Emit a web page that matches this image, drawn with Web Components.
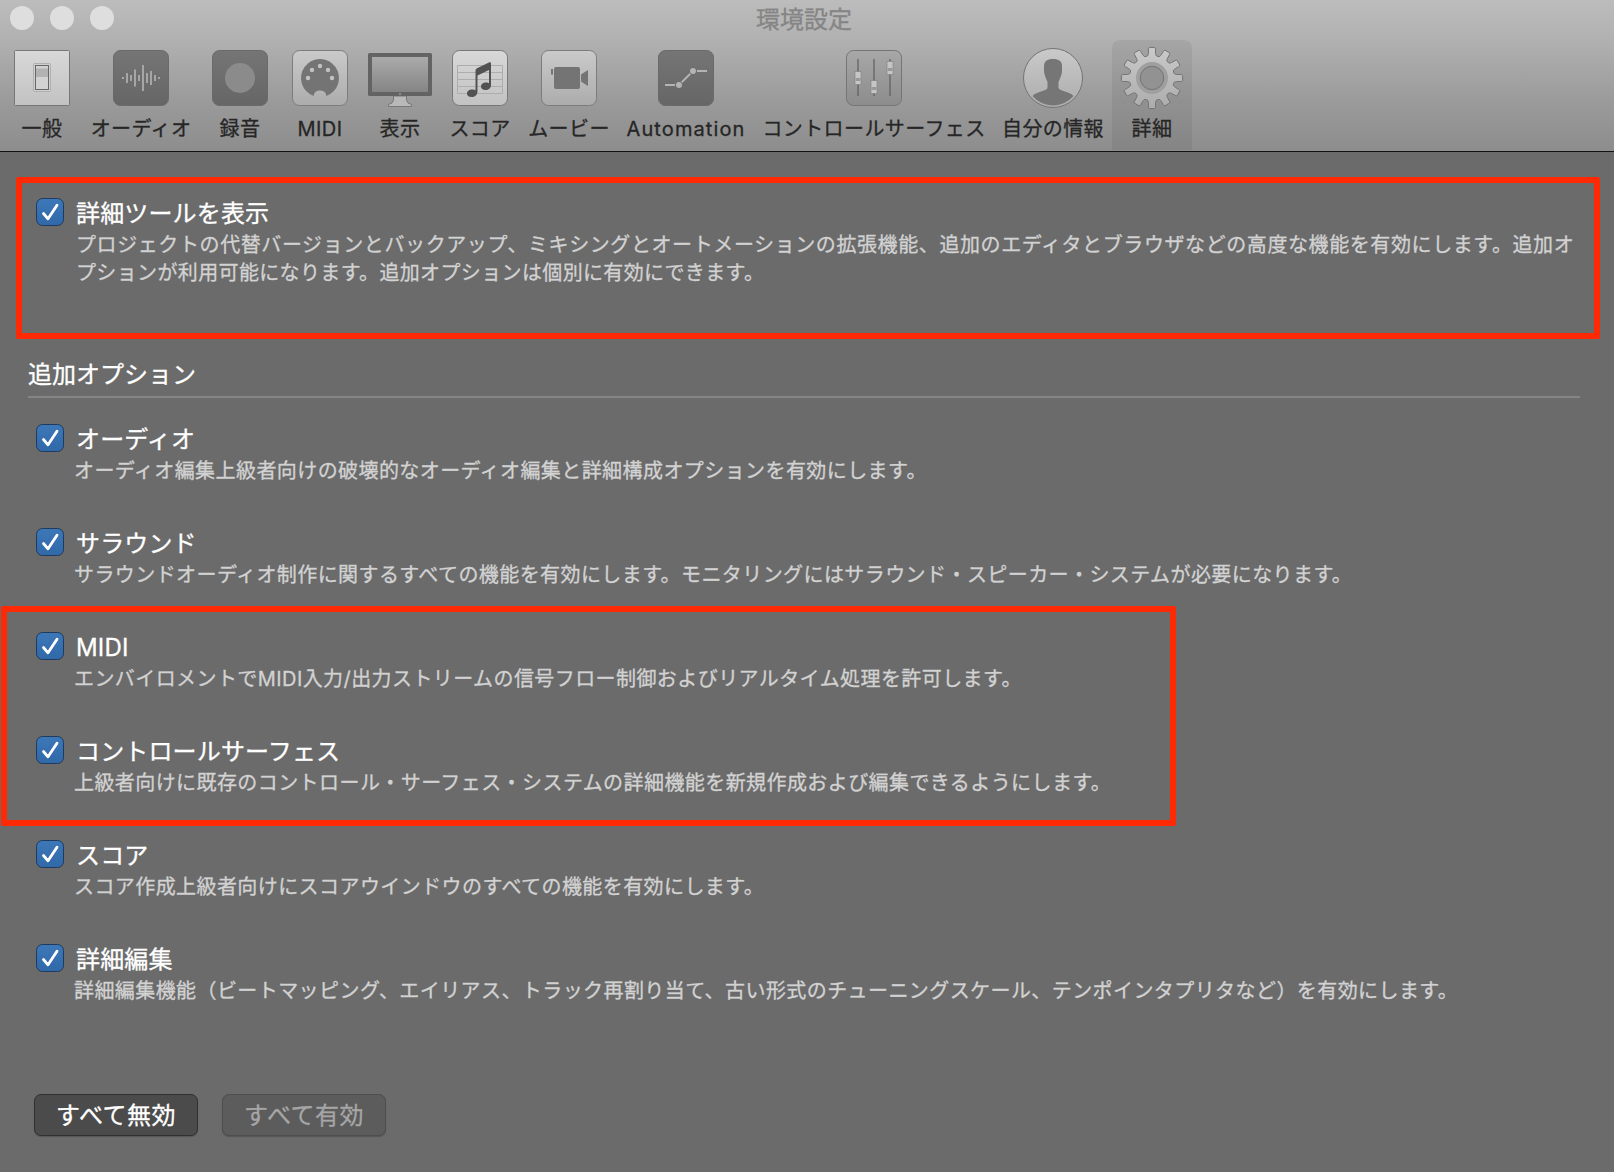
<!DOCTYPE html>
<html lang="ja">
<head>
<meta charset="utf-8">
<title>環境設定</title>
<style>
    html, body {
        margin: 0;
        height: 100%;
        overflow: hidden;
    }

    body {
        background: #6b6b6b;
        font-family: Inter, "Noto Sans CJK JP", sans-serif;
        font-size: 20px;
        -webkit-text-stroke: .3px;
    }
</style>
</head>
<body>
<pref-window heading="環境設定">
    <pref-tab slot="tabs" icon="general" style="width: 80px">一般</pref-tab>
    <pref-tab slot="tabs" icon="audio" style="width: 118px">オーディオ</pref-tab>
    <pref-tab slot="tabs" icon="record" style="width: 80px">録音</pref-tab>
    <pref-tab slot="tabs" icon="midi" style="width: 80px">MIDI</pref-tab>
    <pref-tab slot="tabs" icon="display" style="width: 80px">表示</pref-tab>
    <pref-tab slot="tabs" icon="score" style="width: 80px">スコア</pref-tab>
    <pref-tab slot="tabs" icon="movie" style="width: 98px">ムービー</pref-tab>
    <pref-tab slot="tabs" icon="automation" style="width: 136px; letter-spacing: 1.1px">Automation</pref-tab>
    <pref-tab slot="tabs" icon="surface" style="width: 240px">コントロールサーフェス</pref-tab>
    <pref-tab slot="tabs" icon="profile" style="width: 118px">自分の情報</pref-tab>
    <pref-tab slot="tabs" icon="advanced" style="width: 80px" active>詳細</pref-tab>

    <mark-box style="margin: 25px 14px 0 16px; height: 162px; padding: 15px 0 0 14px">
        <pref-option label="詳細ツールを表示" main><span style="letter-spacing: .59px">プロジェクトの代替バージョンとバックアップ、ミキシングとオートメーションの拡張機能、追加のエディタとブラウザなどの高度な機能を有効にします。追加オ</span><br>プションが利用可能になります。追加オプションは個別に有効にできます。</pref-option>
    </mark-box>
    <pref-heading>追加オプション</pref-heading>
    <pref-option label="オーディオ">オーディオ編集上級者向けの破壊的なオーディオ編集と詳細構成オプションを有効にします。</pref-option>
    <pref-option label="サラウンド">サラウンドオーディオ制作に関するすべての機能を有効にします。モニタリングにはサラウンド・スピーカー・システムが必要になります。</pref-option>
    <mark-box style="margin: -26px 0 14px 1px; width: 1175px; height: 220px; padding: 20px 0 0 29px">
        <pref-option label="MIDI">エンバイロメントでMIDI入力/出力ストリームの信号フロー制御およびリアルタイム処理を許可します。</pref-option>
        <pref-option label="コントロールサーフェス">上級者向けに既存のコントロール・サーフェス・システムの詳細機能を新規作成および編集できるようにします。</pref-option>
    </mark-box>
    <pref-option label="スコア">スコア作成上級者向けにスコアウインドウのすべての機能を有効にします。</pref-option>
    <pref-option label="詳細編集">詳細編集機能（ビートマッピング、エイリアス、トラック再割り当て、古い形式のチューニングスケール、テンポインタプリタなど）を有効にします。</pref-option>

    <pref-button slot="actions">すべて無効</pref-button>
    <pref-button slot="actions" disabled>すべて有効</pref-button>
</pref-window>

<script>
// toolbar icons, centred on 0,0
const gear = () => {
    let d = "";
    const p = (r, a) => {
        a = a * Math.PI / 180;
        return (r * Math.sin(a)).toFixed(2) + " " + (-r * Math.cos(a)).toFixed(2);
    };
    for (let i = 0; i < 12; i++) {
        const a = i * 30;
        d += (i ? "L" : "M") + p(22.5, a - 11.5);
        d += "Q" + p(23.5, a - 9) + " " + p(25, a - 8.2);
        d += "L" + p(29, a - 7) + "Q" + p(30.6, a - 6.6) + " " + p(30.7, a - 5);
        d += "L" + p(30.7, a + 5) + "Q" + p(30.6, a + 6.6) + " " + p(29, a + 7);
        d += "L" + p(25, a + 8.2) + "Q" + p(23.5, a + 9) + " " + p(22.5, a + 11.5);
    }
    return d + "Z";
};

const bars = [[-18.5, 1], [-14.5, 5], [-10.5, 3], [-6.5, 8.5], [-2.5, 3], [1.5, 13], [5.5, 5], [9.5, 7], [13.5, 3], [17.5, 1]];

const tile = (fill, stroke, r = 7) =>
    `<rect x="-27.5" y="-27.5" width="55" height="55" rx="${r}" fill="${fill}" stroke="${stroke}"/>`;

const icons = {
    general: `${tile("url(#light)", "#777", 1)}
        <rect x="-9" y="-15" width="18" height="29" rx="2" fill="#b0b0b0"/>
        <rect x="-8" y="-14" width="16" height="27" rx="1" fill="#d0d0d0"/>
        <rect x="-6.5" y="-12.5" width="13" height="24" fill="#d2d2d2" stroke="#666"/>
        <rect x="-6" y="-9.5" width="12" height="8.5" fill="#b2b2b2"/>`,
    audio: `${tile("url(#dark)", "#6a6a6a")}
        ${bars.map(([x, h]) => `<rect x="${x - .5}" y="${-h}" width="2" height="${h * 2}" fill="#a6a6a6"/>`).join("")}`,
    record: `${tile("url(#dark)", "#6a6a6a")}<circle r="15" fill="#8b8b8b"/>`,
    midi: `${tile("url(#mid)", "#7c7c7c")}
        <path d="M-6.5 17.9A19 19 0 1 1 6.5 17.9A6.6 6.6 0 0 0 -6.5 17.9Z" fill="#747474"/>
        <g fill="#c2c2c2"><circle cy="-12" r="2.2"/><circle cx="-8" cy="-8" r="2.2"/><circle cx="8" cy="-8" r="2.2"/><circle cx="-12" r="2.2"/><circle cx="12" r="2.2"/></g>`,
    display: `<path d="M-6.5 18H6.5V22Q7 25.5 11.5 26.5V28.5H-11.5V26.5Q-7 25.5 -6.5 22Z" fill="#b9b9b9" stroke="#777"/>
        <rect x="-32" y="-25" width="64" height="43" rx="1.5" fill="#636363"/>
        <rect x="-28" y="-21" width="56" height="35" fill="url(#screen)"/>
        <circle cy="16" r="1.2" fill="#8a8a8a"/>`,
    score: `${tile("url(#light)", "#777")}
        <path d="M-22.5 -12.5H22.5V15.5H-22.5ZM-22.5 -5.5H22.5M-22.5 1.5H22.5M-22.5 8.5H22.5" fill="none" stroke="#adadad"/>
        <path d="M-4.500 -7.500Q-4.500 -9 -3 -9.700L9.500 -15.700Q11 -16.300 11 -14.500V7C11 10.500 8.500 12 5.500 12C2.500 12 1 10.500 1 8.500C1 6 3.500 4.500 6 4.500C7.500 4.500 8.500 5 9 5.300V-8L-2.500 -2.500V13C-2.500 17 -5 19 -8.500 19C-11.500 19 -13 17.500 -13 15.500C-13 13 -10.500 11.500 -8 11.500C-6.500 11.500 -5 12 -4.500 12.300Z" fill="#525252"/>`,
    movie: `${tile("url(#mid)", "#7c7c7c")}
        <rect x="-15" y="-11" width="26" height="22" rx="2" fill="#747474"/>
        <path d="M12 -3.5L19 -8V8L12 3.5ZM-18 -9H-16V-3.5H-18Z" fill="#747474"/>`,
    automation: `${tile("url(#dark)", "#6a6a6a")}
        <path d="M-21 7H-7L7 -7H21" fill="none" stroke="#b4b4b4" stroke-width="1.800"/>
        <g fill="#b4b4b4" stroke="#6a6a6a"><circle cx="-7" cy="7" r="3.6"/><circle cx="7" cy="-7" r="3.6"/></g>`,
    surface: `${tile("url(#panel)", "#757575")}
        <path d="M-16 -19V18M0 -19V18M16 -19V18" stroke="#505050"/>
        ${[[-16, 0], [0, 9], [16, -10]].map(([x, y]) => `<rect x="${x - 3}" y="${y - 6.5}" width="6" height="13" fill="#c6c6c6" stroke="#858585" stroke-width=".7"/><path d="M${x - 2.5} ${y}h5v3h-5z" fill="#999"/>`).join("")}`,
    profile: `<circle r="29.5" fill="url(#mid)" stroke="#747474"/>
        <path d="M0 -19C6 -19 9 -16.500 9 -12V-7C9 -5 8.500 -3 7.500 -1C7 1 6 2.500 5.500 4V10C7 13.500 16 13 20.500 18A27 27 0 0 1 -20.500 18C-16 13 -7 13.500 -5.500 10V4C-6 2.500 -7 1 -7.500 -1C-8.500 -3 -9 -5 -9 -7V-12C-9 -16.500 -6 -19 0 -19Z" fill="#767676"/>`,
    advanced: `<path d="${gear()}" fill="url(#mid)" stroke="#747474"/>
        <circle r="14" fill="#929292" stroke="#9f9f9f" stroke-width="4"/>
        <circle r="11.7" fill="#929292" stroke="#747474"/>`
};

const defs = `<defs>
    <linearGradient id="light" x2="0" y2="1"><stop stop-color="#d8d8d8"/><stop offset="1" stop-color="#c2c2c2"/></linearGradient>
    <linearGradient id="mid" x2="0" y2="1"><stop stop-color="#cacaca"/><stop offset="1" stop-color="#acacac"/></linearGradient>
    <linearGradient id="dark" x2="0" y2="1"><stop stop-color="#757575"/><stop offset="1" stop-color="#666"/></linearGradient>
    <linearGradient id="screen" x2="0" y2="1"><stop stop-color="#aaa"/><stop offset="1" stop-color="#858585"/></linearGradient>
    <linearGradient id="panel" x2="0" y2="1"><stop stop-color="#a8a8a8"/><stop offset="1" stop-color="#8c8c8c"/></linearGradient>
</defs>`;

customElements.define('pref-window', class extends HTMLElement {
    constructor() {
        super();
        this.attachShadow({ mode: 'open' });
        this.shadowRoot.innerHTML = `
        <style>
        :host {
            display: flex;
            flex-direction: column;
            height: 1172px;
            background: #6b6b6b;
        }

        header {
            display: flex;
            flex-direction: column;
            height: 151px;
            background: linear-gradient(#bcbcbc, #b2b2b2 24%, #9a9a9a 68%, #8d8d8d);
            border-bottom: 1px solid #111;
        }

        .title {
            display: grid;
            grid-template-columns: 1fr auto 1fr;
            align-items: center;
            height: 40px;
            padding-right: 6px;
            font-size: 24px;
            line-height: 36px;
            color: #858585;
        }

        .lights {
            display: flex;
            gap: 16px;
            padding: 0 0 4px 10px;
        }

        .lights i {
            width: 24px;
            height: 24px;
            border-radius: 50%;
            background: #dedede;
        }

        nav {
            display: flex;
            padding-left: 2px;
        }

        main {
            display: flex;
            flex-direction: column;
            flex: 1;
        }

        main ::slotted(pref-option) {
            margin-left: 36px;
        }

        footer {
            display: flex;
            gap: 24px;
            padding: 0 0 36px 34px;
        }
        </style>
        <header>
            <div class="title"><div class="lights"><i></i><i></i><i></i></div><span>${this.getAttribute("heading")}</span></div>
            <nav><slot name="tabs"></slot></nav>
        </header>
        <main><slot></slot></main>
        <footer><slot name="actions"></slot></footer>`;
    }
});

customElements.define('pref-tab', class extends HTMLElement {
    constructor() {
        super();
        this.attachShadow({ mode: 'open' });
        this.shadowRoot.innerHTML = `
        <style>
        :host {
            display: flex;
            flex-direction: column;
            align-items: center;
            flex: none;
            height: 110px;
            color: #262626;
            line-height: 28px;
            letter-spacing: .4px;
            white-space: nowrap;
        }

        :host([active]) {
            background: rgba(0, 0, 0, .06);
            border-radius: 8px 8px 0 0;
        }

        svg {
            display: block;
            margin-top: 4px;
        }

        span {
            margin-top: 3px;
        }
        </style>
        <svg width="68" height="68" viewBox="-34 -34 68 68">${defs}${icons[this.getAttribute("icon")]}</svg>
        <span><slot></slot></span>`;
    }
});

customElements.define('mark-box', class extends HTMLElement {
    constructor() {
        super();
        this.attachShadow({ mode: 'open' });
        this.shadowRoot.innerHTML = `
        <style>
        :host {
            display: block;
            box-sizing: border-box;
            flex: none;
            border: 6px solid #ff2a04;
            border-radius: 2px;
        }
        </style>
        <slot></slot>`;
    }
});

customElements.define('pref-heading', class extends HTMLElement {
    constructor() {
        super();
        this.attachShadow({ mode: 'open' });
        this.shadowRoot.innerHTML = `
        <style>
        :host {
            display: block;
            margin: 18px 34px 26px 28px;
            height: 39px;
            border-bottom: 2px solid #858585;
            color: #fff;
            font-size: 24px;
            line-height: 36px;
        }
        </style>
        <slot></slot>`;
    }
});

customElements.define('pref-option', class extends HTMLElement {
    constructor() {
        super();
        this.attachShadow({ mode: 'open' });
        this.shadowRoot.innerHTML = `
        <style>
        :host {
            display: flex;
            flex: none;
            gap: 12px;
            height: 104px;
            white-space: nowrap;
        }

        svg {
            flex: none;
        }

        .label {
            height: 33px;
            color: #fff;
            font-size: 24px;
            line-height: 32px;
            letter-spacing: .15px;
        }

        .text {
            margin-left: -2px;
            color: #d2d2d2;
            line-height: 28px;
            letter-spacing: .42px;
        }

        :host([main]) .text {
            margin-left: 0;
            letter-spacing: .36px;
        }
        </style>
        <svg width="28" height="28" viewBox="0 0 28 28">
            <defs><linearGradient id="blue" x2="0" y2="1"><stop stop-color="#3d78b8"/><stop offset="1" stop-color="#3068a8"/></linearGradient></defs>
            <rect x=".5" y=".5" width="27" height="27" rx="6" fill="url(#blue)" stroke="#1f3a5c"/>
            <path d="M7.5 15.5L12 20.8L21 7.2" fill="none" stroke="#fff" stroke-width="2.800" stroke-linecap="round" stroke-linejoin="round"/>
        </svg>
        <div>
            <div class="label">${this.getAttribute("label")}</div>
            <div class="text"><slot></slot></div>
        </div>`;
    }
});

customElements.define('pref-button', class extends HTMLElement {
    constructor() {
        super();
        this.attachShadow({ mode: 'open' });
        this.shadowRoot.innerHTML = `
        <style>
        :host {
            display: flex;
            align-items: center;
            justify-content: center;
            box-sizing: border-box;
            width: 164px;
            height: 42px;
            padding-top: 2px;
            border: 1px solid #303030;
            border-radius: 7px;
            background: #4b4b4b;
            box-shadow: 0 1px 1px rgba(0, 0, 0, .2);
            color: #fff;
            font-size: 24px;
            line-height: 38px;
            letter-spacing: .5px;
        }

        :host([disabled]) {
            background: #5c5c5c;
            border-color: #4e4e4e;
            color: #a6a6a6;
        }
        </style>
        <slot></slot>`;
    }
});
</script>
</body>
</html>
